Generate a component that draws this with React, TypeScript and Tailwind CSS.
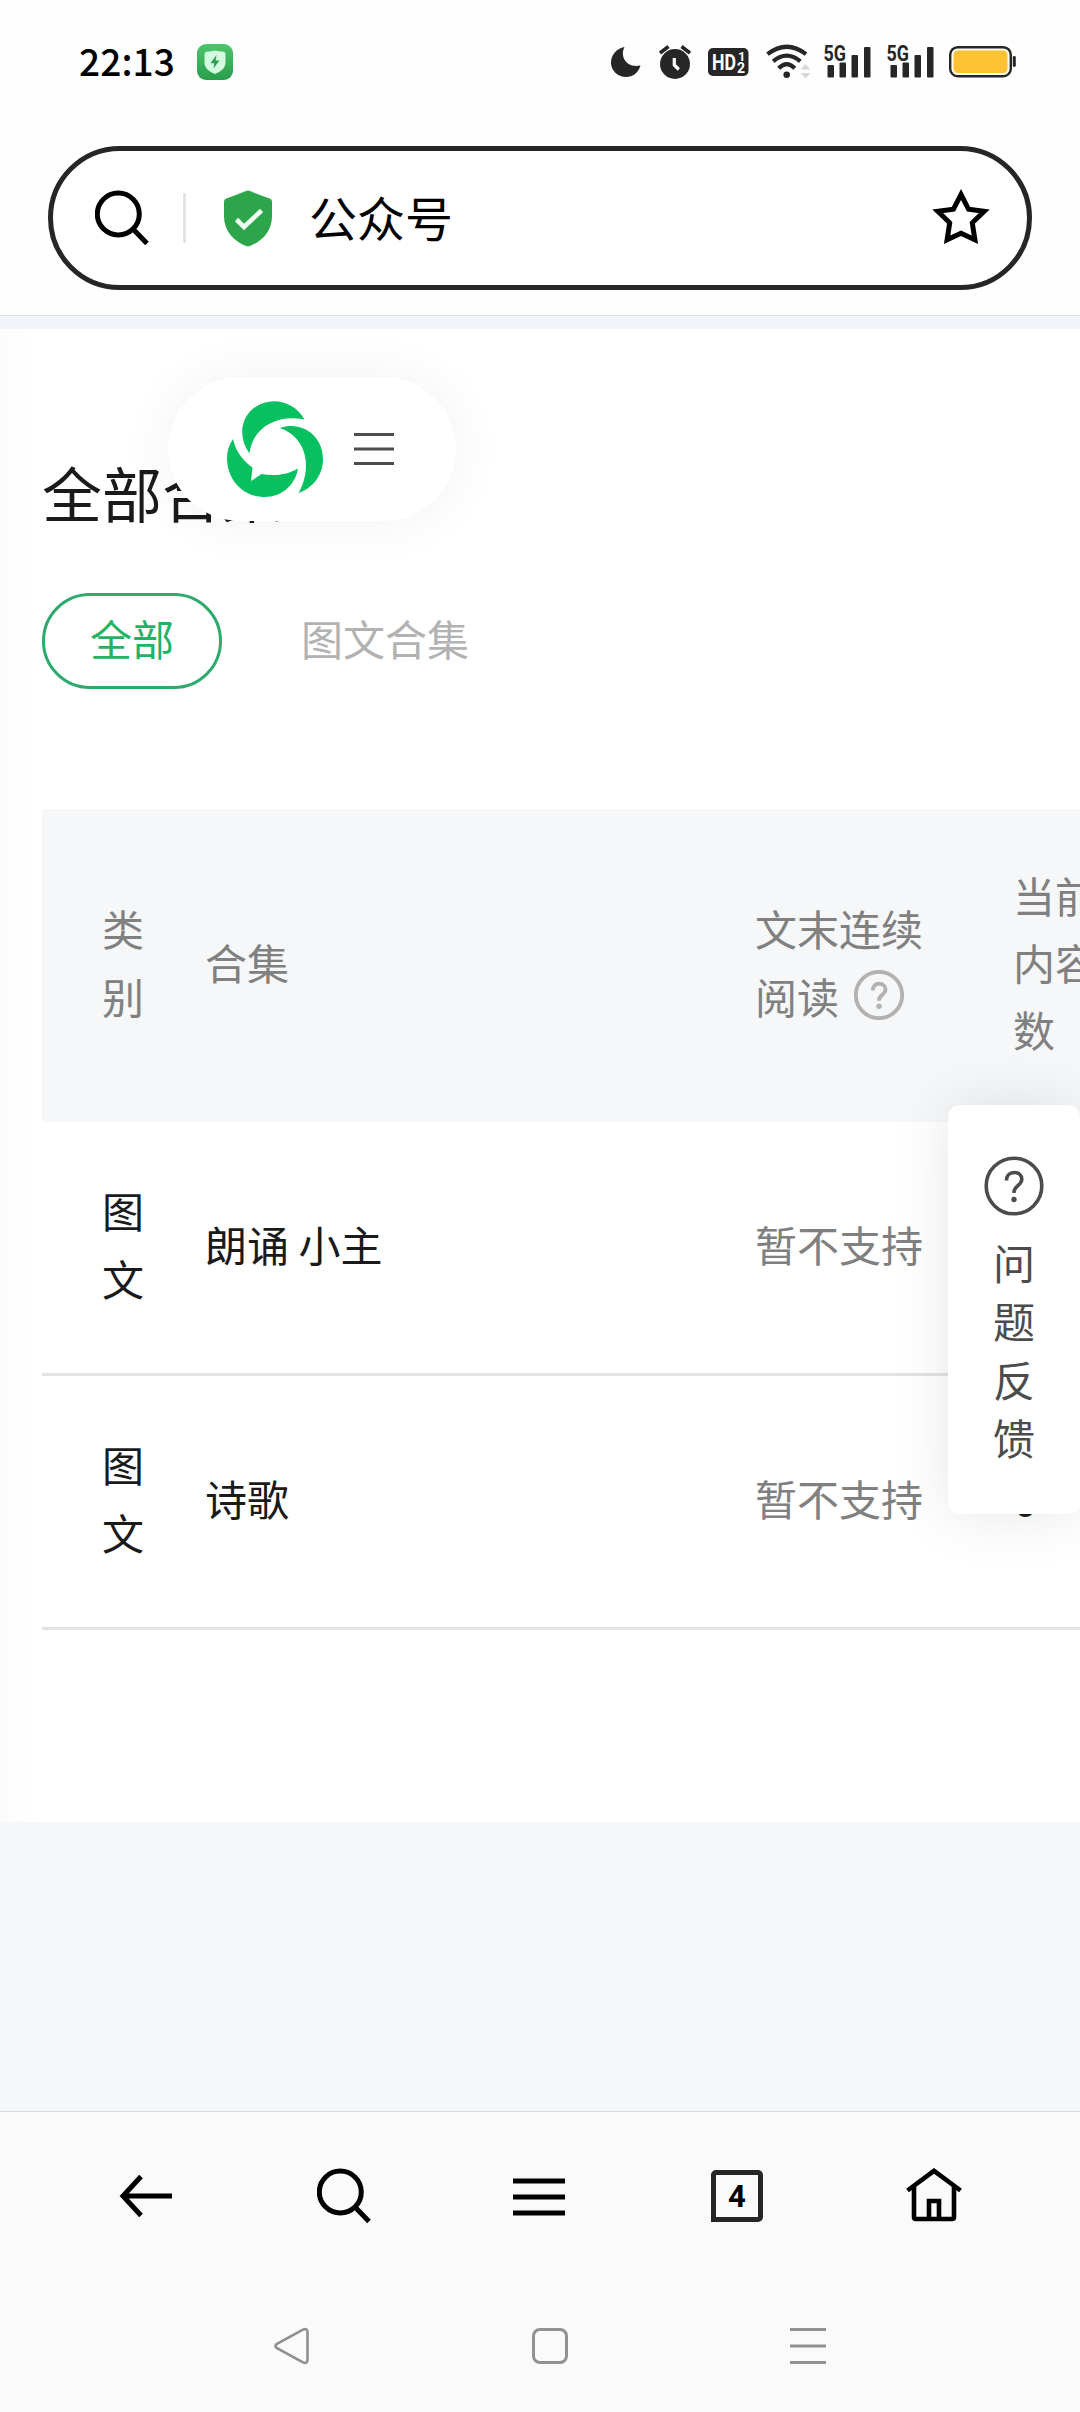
import React from "react";

const CJK = "font-['Noto_Sans_CJK_SC',sans-serif]";

/* ---------- status bar ---------- */

function Signal() {
  return (
    <svg className="overflow-visible" width="47" height="36" viewBox="0 0 47 36" fill="#262626">
      <text
        x="-0.500"
        y="16.500"
        fontFamily="Roboto, sans-serif"
        fontWeight="700"
        fontSize="21.500"
        textLength="22.500"
        lengthAdjust="spacingAndGlyphs"
      >
        5G
      </text>
      <rect x="3.500" y="21" width="6.500" height="12.500" rx="1" />
      <rect x="15.500" y="18.500" width="6.500" height="15" rx="1" />
      <rect x="27.500" y="11" width="6.500" height="22.500" rx="1" />
      <rect x="40" y="3" width="6.500" height="30.500" rx="1" />
    </svg>
  );
}

function StatusBar() {
  return (
    <div className="flex h-[124px] shrink-0 items-center pl-[79px] pr-[64px]">
      <span className="w-[118px] pb-[3px] text-[37px] font-medium leading-none tracking-[0.1px] text-black">22:13</span>
      <svg width="36" height="36" viewBox="0 0 36 36">
        <defs>
          <linearGradient id="guard" x1="0" y1="0" x2="0" y2="1">
            <stop offset="0" stopColor="#4cc56c" />
            <stop offset="1" stopColor="#2a9d4b" />
          </linearGradient>
        </defs>
        <rect width="36" height="36" rx="9" fill="url(#guard)" />
        <path d="M18 6.500c3.500 1 7 1 8.500 1.200 1.500.3 2 1.300 2 2.800v8c0 5.500-4.500 9-10.500 11.500-6-2.500-10.500-6-10.500-11.500v-8c0-1.500.5-2.500 2-2.800 1.500-.2 5-.2 8.500-1.200z" fill="#d3fbdf" />
        <path d="M19.500 11l-6 8.200h3.800l-.9 5.300 6-8h-3.800z" fill="#2a9d4b" />
      </svg>
      <div className="ml-auto flex items-center">
        <svg className="mr-[18px]" width="30" height="30" viewBox="0 0 30 30">
          <path d="M13.500 0C9 8 14 21.500 29.500 18.500 27.500 25.500 22 30 15 30 6.500 30 0 23.500 0 15.500 0 8 5.500 1.500 13.500 0z" fill="#262626" />
        </svg>
        <svg className="mr-[17px]" width="32" height="34" viewBox="0 0 32 34">
          <circle cx="16" cy="19" r="15" fill="#262626" />
          <path d="M1 8l8.500-6.500M31 8l-8.500-6.500" stroke="#262626" strokeWidth="3.600" />
          <path d="M15.300 13v7l4.500 4.500" stroke="#fff" strokeWidth="3.200" fill="none" />
        </svg>
        <svg className="mr-[17px]" width="41" height="28" viewBox="0 0 41 28">
          <rect width="40.500" height="28" rx="5" fill="#262626" />
          <g fill="#fff" fontFamily="Roboto, sans-serif" fontWeight="700">
            <text x="4" y="22" fontSize="22.500" textLength="24" lengthAdjust="spacingAndGlyphs">
              HD
            </text>
            <text x="30" y="13" fontSize="13">
              1
            </text>
            <text x="29" y="24.500" fontSize="14">
              2
            </text>
          </g>
        </svg>
        <svg className="mr-[12px]" width="46" height="36" viewBox="0 0 46 36" fill="none" stroke="#262626" strokeWidth="4.200">
          <path d="M1.500 10.200Q20.700-4.700 40 10.200" />
          <path d="M7.200 17.300Q20.700 6 34.300 17.300" />
          <path d="M12.700 24.300Q20.700 16 28.800 24.300" />
          <circle cx="20.700" cy="30.700" r="3.300" fill="#262626" stroke="none" />
          <path d="M34.500 25.500l5-5.500 5 5.500zM34.500 29l5 5.500 5-5.500z" fill="#d8d8d8" stroke="none" />
        </svg>
        <div className="mr-[15px] flex gap-[16px]">
          <Signal />
          <Signal />
        </div>
        <svg width="67" height="32" viewBox="0 0 67 32">
          <rect x="1.200" y="1.200" width="60.600" height="29" rx="7.500" fill="#fffde8" stroke="#262626" strokeWidth="2.400" />
          <rect x="4.500" y="4.500" width="54" height="22.500" rx="4.500" fill="#ffc233" />
          <rect x="63.800" y="10" width="3" height="11" rx="1.400" fill="#262626" />
        </svg>
      </div>
    </div>
  );
}

/* ---------- address bar ---------- */

function SearchIcon() {
  return (
    <svg width="54" height="56" viewBox="0 0 54 56" fill="none" stroke="#000" strokeWidth="5">
      <circle cx="23.300" cy="24" r="21" />
      <path d="M38 39L52 53.500" />
    </svg>
  );
}

function AddressBar() {
  return (
    <div className="mx-[48px] mt-[22px] flex h-[144px] shrink-0 items-center rounded-full border-[5px] border-[#262626] bg-white pl-[42px] pr-[36px]">
      <SearchIcon />
      <div className="ml-[34px] mr-[37px] h-[50px] w-[3px] bg-[#e4e4e4]" />
      <svg width="50" height="57" viewBox="0 0 50 57">
        <path d="M25 .5l2.500.8 19 7.200c1.700.7 2.500 1.700 2.500 3.500v14c0 15-9.500 25-22 30a6 6 0 0 1-4 0C10.500 51 1 41 1 26V12c0-1.800.8-2.800 2.500-3.500l19-7.200z" fill="#2da54b" />
        <path d="M13.500 29.500l7.500 7.500 17.500-16.500" fill="none" stroke="#f0fff2" strokeWidth="4.600" />
      </svg>
      <span className="ml-[36px] pb-[4px] text-[48px] leading-none text-black">公众号</span>
      <svg className="-mt-[3px] ml-auto" width="60" height="58" viewBox="0 0 60 58">
        <path d="M30 6.500l7.600 14.800 15.600 2L41.300 34.800l2.600 17L30 45.200l-13.900 6.600 2.600-17L6.800 23.300l15.600-2z" fill="none" stroke="#000" strokeWidth="5" />
      </svg>
    </div>
  );
}

/* ---------- page content ---------- */

function QuestionIcon({ size, stroke, color }: { size: number; stroke: number; color: string }) {
  return (
    <svg width={size} height={size} viewBox="0 0 60 60" fill="none" stroke={color} strokeWidth={stroke}>
      <circle cx="30" cy="30" r="27.800" />
      <path d="M22.500 24.500c0-4.800 3-8 7.700-8 4.500 0 7.600 2.800 7.600 6.800 0 6-7.800 6.700-7.800 12.700v1" />
      <circle cx="30" cy="43.500" r={stroke > 4 ? 3.2 : 2.7} fill={color} stroke="none" />
    </svg>
  );
}

function FloatingMenu() {
  return (
    <div className="absolute left-[168px] top-[48px] flex h-[144px] w-[288px] items-center rounded-full bg-white pl-[59px] shadow-[0_0_54px_rgba(0,0,0,0.06)]">
      <svg width="96" height="96" viewBox="0 0 96 96" fill="#07c160">
        <path d="M22.500 52.500C12 38 13 20 24.500 9 41-6 67-1 77.500 18.500 53 13 26 24 22.500 52.500z" />
        <path d="M53 27C75 19.500 96 35 96 58c0 16-10 29-24.500 34C84 71 83 38 53 27z" />
        <path d="M6 38c3 13 9.500 21 19.500 28.500L24 80l10.500-7C48 75.500 61 73.500 71 67.500 68 85 54 96 38 96 15 96 0 78 0 57c0-7 2-13 6-19z" />
      </svg>
      <svg className="ml-[31px]" width="40" height="34" viewBox="0 0 40 34" stroke="#4c4c4c" strokeWidth="3">
        <path d="M0 2.500h40M0 17h40M0 31.500h40" />
      </svg>
    </div>
  );
}

function FeedbackPanel() {
  return (
    <div className="absolute left-[948px] top-[776px] flex h-[409px] w-[132px] flex-col items-center rounded-[12px] bg-white pt-[51px] text-[#4c4c4c] shadow-[0_0_60px_rgba(0,0,0,0.1)]">
      <QuestionIcon size={60} stroke={3.6} color="#4c4c4c" />
      <span className="mt-[17px] w-[42px] break-all text-[42px] leading-[58.300px]">问题反馈</span>
    </div>
  );
}

const columns = "grid w-[1200px] grid-cols-[163px_550px_258px_229px] items-center pb-[8px]";

function Row({ name, count }: { name: string; count?: string }) {
  return (
    <div className={`${columns} h-[254px] border-b-[3px] border-[#e2e4e4] text-[42px] leading-[67.200px] text-[#1a1a1a]`}>
      <span className="ml-[60px] w-[42px] break-all">图文</span>
      <span>{name}</span>
      <span className="text-[#808080]">暂不支持</span>
      <span>{count}</span>
    </div>
  );
}

function Content() {
  return (
    <main className="relative h-[1782px] shrink-0 overflow-hidden bg-[#f5f7f9]">
      <div className="flex h-[1493px] flex-col bg-gradient-to-r from-[#fcfcfc] to-white to-[36px] pl-[42px]">
        <h1 className="mt-[133px] text-[60px] leading-[60px] text-[#1a1a1a]">全部合集</h1>
        <div className="mt-[71px] flex h-[96px] shrink-0 items-center text-[42px] leading-none">
          <span className="flex h-full w-[180px] items-center justify-center rounded-full border-[3px] border-[#2eaa6c] pb-[7px] text-[#1fb464]">全部</span>
          <span className="ml-[79px] pb-[7px] text-[#b2b2b2]">图文合集</span>
        </div>
        <div className="mt-[120px]">
          <div className={`${columns} h-[313px] bg-[#f5f7f9] text-[42px] leading-[67.200px] text-[#808080]`}>
            <span className="ml-[60px] w-[42px] break-all">类别</span>
            <span>合集</span>
            <div>
              <div>文末连续</div>
              <div className="flex items-center gap-[15px]">
                阅读
                <QuestionIcon size={50} stroke={4.6} color="#b2b2b2" />
              </div>
            </div>
            <span>
              当前
              <br />
              内容
              <br />
              数
            </span>
          </div>
          <Row name="朗诵 小主" />
          <Row name="诗歌" count="6" />
        </div>
      </div>
      <FloatingMenu />
      <FeedbackPanel />
    </main>
  );
}

/* ---------- bottom bars ---------- */

function BrowserNav() {
  return (
    <nav className="flex h-[171px] shrink-0 items-center border-t border-[#d6d8da] pb-[2px] pl-[119px]">
      <svg className="mr-[145px]" width="53" height="56" viewBox="0 0 53 56" fill="none" stroke="#000" strokeWidth="5">
        <path d="M53 28H4M22 8.500L4 28l18 19.500" />
      </svg>
      <SearchIcon />
      <svg className="ml-[142px]" width="52" height="56" viewBox="0 0 52 56" stroke="#000" strokeWidth="5">
        <path d="M0 13h52M0 29h52M0 45h52" />
      </svg>
      <div className="ml-[146px] flex h-[52px] w-[52px] items-center justify-center rounded-[5px] rounded-bl-none border-[5px] border-[#262626] font-[Roboto,sans-serif] text-[31px] font-bold leading-none text-black">
        4
      </div>
      <svg className="-mt-[3px] ml-[143px]" width="56" height="54" viewBox="0 0 56 54" fill="none" stroke="#000" strokeWidth="4.600">
        <path d="M1.500 22.500L28 2.800l26.500 19.700" />
        <path d="M8 18v31q0 2 2 2h36q2 0 2-2V18" />
        <path d="M23 51V33h10v18" />
      </svg>
    </nav>
  );
}

function SystemNav() {
  return (
    <div className="flex h-[130px] shrink-0 items-center pb-[2px] pl-[274px]">
      <svg width="36" height="38" viewBox="0 0 36 38" fill="none" stroke="#8f8f8f" strokeWidth="2.600" strokeLinejoin="round">
        <path d="M2.500 17.200L29 2.600q4.500-1.600 4.500 2.400v28q0 4-4.500 2.400L2.500 20.800q-2-1.800 0-3.600z" />
      </svg>
      <div className="ml-[222px] h-[36px] w-[36px] rounded-[8px] border-[3px] border-[#929292]" />
      <svg className="ml-[222px]" width="36" height="38" viewBox="0 0 36 38" stroke="#929292" strokeWidth="3">
        <path d="M0 2.500h36M0 19h36M0 35.500h36" />
      </svg>
    </div>
  );
}

export default function App() {
  return (
    <div className={`flex h-[2412px] w-[1080px] flex-col overflow-hidden bg-[#fafafa] ${CJK}`}>
      <header className="flex h-[329px] shrink-0 flex-col border-b-[13px] border-[#f1f4f8] bg-[#fefefe]">
        <StatusBar />
        <AddressBar />
        <div className="mt-auto h-px shrink-0 bg-[#d9dfe2]" />
      </header>
      <Content />
      <BrowserNav />
      <SystemNav />
    </div>
  );
}
